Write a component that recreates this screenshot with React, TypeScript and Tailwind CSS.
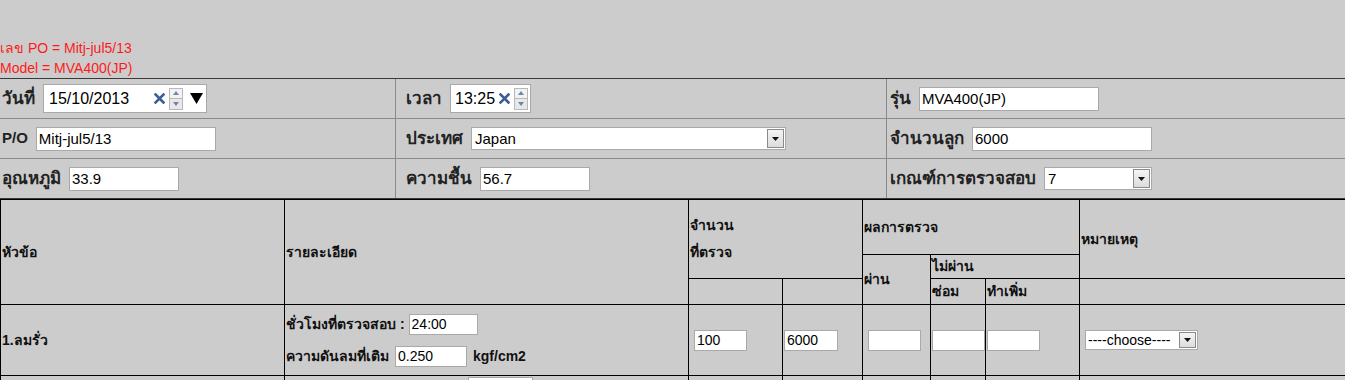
import React from 'react';

const font = 'font-["Liberation_Sans",Tahoma,sans-serif]';
const narrow = 'font-["Liberation_Sans_Narrow","Liberation_Sans",Tahoma,sans-serif]';

const Spin: React.FC = () => (
  <div className="flex flex-col">
    <div className="w-[14px] h-[11px] border border-[#b8b8b8] bg-[#f2f2f2] flex items-center justify-center">
      <svg width="6" height="4" viewBox="0 0 6 4"><path d="M0 4 L3 0 L6 4 Z" fill="#6f85ad" /></svg>
    </div>
    <div className="w-[14px] h-[11px] border border-t-0 border-[#b8b8b8] bg-[#e8e8e8] flex items-center justify-center">
      <svg width="6" height="4" viewBox="0 0 6 4"><path d="M0 0 L3 4 L6 0 Z" fill="#6f85ad" /></svg>
    </div>
  </div>
);

const Clear: React.FC = () => (
  <svg width="11" height="11" viewBox="0 0 11 11">
    <path d="M1.5 1.5 L9.5 9.5 M9.5 1.5 L1.5 9.5" stroke="#3c5e98" strokeWidth="2.6" strokeLinecap="square" />
  </svg>
);

const SelectArrow: React.FC<{ h?: string }> = ({ h = 'h-[19px]' }) => (
  <div className={`w-[17px] ${h} border border-[#8a8a8a] bg-gradient-to-b from-[#f4f4f4] to-[#dcdcdc] flex items-center justify-center`}>
    <svg width="7" height="4" viewBox="0 0 7 4"><path d="M0 0 L7 0 L3.5 4 Z" fill="#111" /></svg>
  </div>
);

const TextBox: React.FC<{ value: string; w: string; h?: string; cls?: string }> = ({ value, w, h = 'h-[24px]', cls = 'text-[15px]' }) => (
  <div className={`${w} ${h} bg-white border border-[#a9a9a9] flex items-center pl-[2px] ${cls} font-normal text-black leading-none`}>
    {value}
  </div>
);

const Select: React.FC<{ value: string; w: string; h?: string; cls?: string }> = ({ value, w, h = 'h-[23px]', cls = 'text-[15px]' }) => (
  <div className={`${w} ${h} bg-white border border-[#a9a9a9] flex items-center justify-between pl-[3px] pr-[1px] ${cls} text-black leading-none`}>
    <span>{value}</span>
    <SelectArrow />
  </div>
);

const Cell: React.FC<{ children: React.ReactNode; pl: string; last?: boolean }> = ({ children, pl, last }) => (
  <div className={`flex items-center ${pl} ${last ? '' : 'border-r border-[#8a8a8a]'}`}>{children}</div>
);

// Thai labels render narrower than the original Tahoma, so they get a touch more size
const Label: React.FC<{ children: React.ReactNode; latin?: boolean }> = ({ children, latin }) => (
  <span className={`${latin ? 'text-[15px]' : 'text-[17px]'} font-bold text-[#222] mr-[8px] whitespace-nowrap`}>{children}</span>
);

const th = `border border-black align-middle text-left px-[1px] text-[14px] font-bold text-[#111] ${narrow}`;
const td = 'border border-black align-middle px-[1px]';

const SmallBox: React.FC<{ value?: string; w: string }> = ({ value = '', w }) => (
  <div className={`${w} h-[21px] bg-white border border-[#a9a9a9] flex items-center pl-[2px] text-[14px] font-normal text-black leading-none ${narrow}`}>
    {value}
  </div>
);

export default function App() {
  return (
    <div className={`w-[1345px] h-[380px] overflow-hidden bg-[#cccccc] ${font}`}>
      <div className="pt-[38px] text-[14px] leading-[20px] text-[#ff1a1a]">
        <div>เลข PO = Mitj-jul5/13</div>
        <div>Model = MVA400(JP)</div>
      </div>

      <div className="border-t border-b border-[#3a3a3a]">
        <div className="grid grid-cols-[396px_491px_458px] h-[40px] border-b border-[#8a8a8a]">
          <Cell pl="pl-[2px]">
            <Label>วันที่</Label>
            <div className="w-[164px] h-[29px] bg-white border border-[#a9a9a9] flex items-center pl-[5px] text-[16px] leading-none text-black">
              <span className="w-[105px]">15/10/2013</span>
              <Clear />
              <div className="ml-[4px]"><Spin /></div>
              <svg className="ml-[7px]" width="13" height="11" viewBox="0 0 13 11"><path d="M0 0 L13 0 L6.5 11 Z" fill="#000" /></svg>
            </div>
          </Cell>
          <Cell pl="pl-[10px]">
            <Label>เวลา</Label>
            <div className="w-[81px] h-[29px] bg-white border border-[#a9a9a9] flex items-center pl-[4px] text-[16px] leading-none text-black">
              <span className="w-[44px]">13:25</span>
              <Clear />
              <div className="ml-[4px]"><Spin /></div>
            </div>
          </Cell>
          <Cell pl="pl-[3px]" last>
            <Label>รุ่น</Label>
            <TextBox value="MVA400(JP)" w="w-[180px]" />
          </Cell>
        </div>
        <div className="grid grid-cols-[396px_491px_458px] h-[40px] border-b border-[#8a8a8a]">
          <Cell pl="pl-[2px]">
            <Label latin>P/O</Label>
            <TextBox value="Mitj-jul5/13" w="w-[180px]" />
          </Cell>
          <Cell pl="pl-[10px]">
            <Label>ประเทศ</Label>
            <Select value="Japan" w="w-[315px]" />
          </Cell>
          <Cell pl="pl-[3px]" last>
            <Label>จำนวนลูก</Label>
            <TextBox value="6000" w="w-[180px]" />
          </Cell>
        </div>
        <div className="grid grid-cols-[396px_491px_458px] h-[39px]">
          <Cell pl="pl-[2px]">
            <Label>อุณหภูมิ</Label>
            <TextBox value="33.9" w="w-[110px]" />
          </Cell>
          <Cell pl="pl-[10px]">
            <Label>ความชื้น</Label>
            <TextBox value="56.7" w="w-[110px]" />
          </Cell>
          <Cell pl="pl-[3px]" last>
            <Label>เกณฑ์การตรวจสอบ</Label>
            <Select value="7" w="w-[108px]" />
          </Cell>
        </div>
      </div>

      <table className="table-fixed border-collapse w-[1346px] border-t border-black">
        <colgroup>
          <col className="w-[284px]" />
          <col className="w-[404px]" />
          <col className="w-[94px]" />
          <col className="w-[80px]" />
          <col className="w-[68px]" />
          <col className="w-[55px]" />
          <col className="w-[94px]" />
          <col className="w-[267px]" />
        </colgroup>
        <tbody>
          <tr className="h-[55px]">
            <th rowSpan={3} className={th}>หัวข้อ</th>
            <th rowSpan={3} className={th}>รายละเอียด</th>
            <th rowSpan={2} colSpan={2} className={`${th} leading-[27px]`}>จำนวน<br />ที่ตรวจ</th>
            <th colSpan={3} className={th}>ผลการตรวจ</th>
            <th rowSpan={2} className={th}>หมายเหตุ</th>
          </tr>
          <tr className="h-[24px]">
            <th rowSpan={2} className={th}>ผ่าน</th>
            <th colSpan={2} className={th}>ไม่ผ่าน</th>
          </tr>
          <tr className="h-[26px]">
            <th className={th}></th>
            <th className={th}></th>
            <th className={th}>ซ่อม</th>
            <th className={th}>ทำเพิ่ม</th>
            <th className={th}></th>
          </tr>
          <tr className="h-[71px]">
            <td className={`${td} text-[14px] font-bold text-[#111] ${narrow}`}>1.ลมรั่ว</td>
            <td className={td}>
              <div className={`flex flex-col gap-[11px] text-[14px] font-bold text-[#111] ${narrow}`}>
                <div className="flex items-center">
                  <span className="mr-[4px]">ชั่วโมงที่ตรวจสอบ :</span>
                  <SmallBox value="24:00" w="w-[69px]" />
                </div>
                <div className="flex items-center">
                  <span className="mr-[6px]">ความดันลมที่เติม</span>
                  <SmallBox value="0.250" w="w-[72px]" />
                  <span className="ml-[6px]">kgf/cm2</span>
                </div>
              </div>
            </td>
            <td className={`${td} pl-[5px]`}><SmallBox value="100" w="w-[53px]" /></td>
            <td className={td}><SmallBox value="6000" w="w-[54px]" /></td>
            <td className={`${td} pl-[5px]`}><SmallBox w="w-[53px]" /></td>
            <td className={td}><SmallBox w="w-[53px]" /></td>
            <td className={td}><SmallBox w="w-[53px]" /></td>
            <td className={`${td} pl-[5px]`}>
              <div className="w-[113px] h-[20px] bg-white border border-[#a9a9a9] flex items-center justify-between pl-[2px] pr-[1px] text-[14px] text-black leading-none">
                <span>----choose----</span>
                <SelectArrow h="h-[16px]" />
              </div>
            </td>
          </tr>
          <tr className="h-[40px]">
            <td className={td}></td>
            <td className={`${td} align-top`}>
              <div className="pl-[182px] pt-[1px]"><SmallBox w="w-[65px]" /></div>
            </td>
            <td className={td}></td>
            <td className={td}></td>
            <td className={td}></td>
            <td className={td}></td>
            <td className={td}></td>
            <td className={td}></td>
          </tr>
        </tbody>
      </table>
    </div>
  );
}
